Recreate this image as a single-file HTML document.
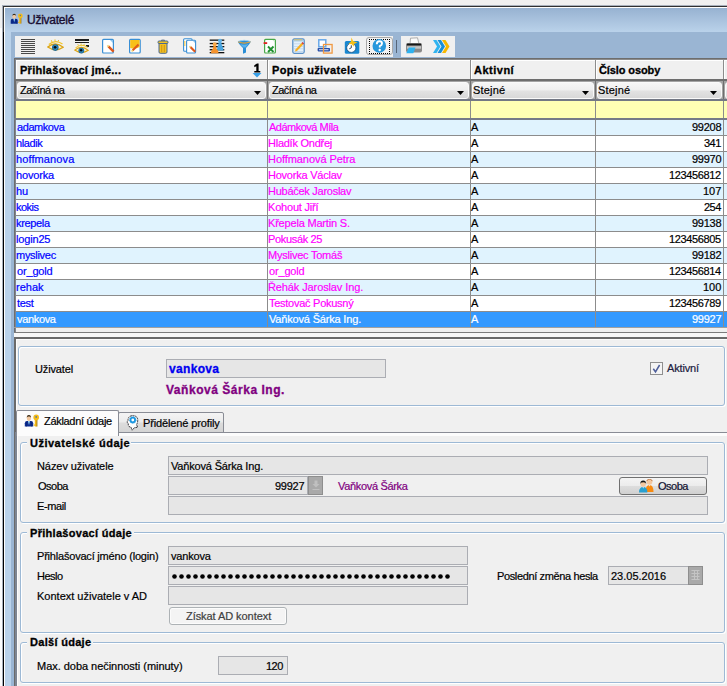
<!DOCTYPE html><html><head><meta charset="utf-8"><style>
*{margin:0;padding:0;box-sizing:border-box}
html,body{width:727px;height:686px;overflow:hidden;background:#f0f0f0}
body{position:relative;font-family:"Liberation Sans",sans-serif;font-size:11px;line-height:13px;color:#000}
div,span,svg{position:absolute}
span{white-space:nowrap;-webkit-text-stroke:0.2px currentColor}
</style></head><body><div style="left:0px;top:0px;width:727px;height:686px;background:#f0f0f0"></div>
<div style="left:0px;top:28px;width:2px;height:658px;background:#fcfcfc"></div>
<div style="left:2px;top:5px;width:725px;height:681px;background:#a8b0bc"></div>
<div style="left:3px;top:6px;width:724px;height:680px;background:#000"></div>
<div style="left:3px;top:6px;width:1px;height:26px;background:#383838"></div>
<div style="left:3px;top:6px;width:724px;height:1px;background:#303030"></div>
<div style="left:4px;top:7px;width:723px;height:679px;background:#fff"></div>
<div style="left:5px;top:8px;width:722px;height:678px;background:#bad2ea"></div>
<div style="left:5px;top:8px;width:722px;height:24px;background:linear-gradient(#97b2d1,#bad2ea)"></div>
<div style="left:11px;top:32px;width:716px;height:654px;background:#9ab5d3"></div>
<svg style="left:9.5px;top:13.3px" width="13.6" height="11" viewBox="0 0 16 13"><path d="M0.8 12.6 V9.2 Q0.8 6.9 3.2 6.9 H6.8 Q9.2 6.9 9.2 9.2 V12.6Z" fill="#0c2c90"/><path d="M2.5 7.5 V12.5 M7.5 7.5 V12.5" stroke="#08206a" stroke-width="0.6"/><path d="M4 6.9 H5.9 L5 11Z" fill="#b0ecfa"/><ellipse cx="4.9" cy="4.1" rx="2.1" ry="2.9" fill="#f2c8a0"/><path d="M2.8 3.8 Q2.6 0.9 4.9 0.9 Q7.2 0.9 7 3.8 Q6.5 2.2 4.9 2.4 Q3.3 2.2 2.8 3.8Z" fill="#3a2c18"/><rect x="10.8" y="5.5" width="2.2" height="7" fill="#f0b818"/><rect x="12.6" y="6" width="0.8" height="6.5" fill="#9a7010"/><rect x="9.7" y="10.4" width="1.1" height="1.4" fill="#e8b010"/><circle cx="12.2" cy="3.4" r="2.8" fill="#f4bc18"/><circle cx="12.2" cy="2.9" r="0.9" fill="#5a78a8"/></svg>
<div style="left:15px;top:36px;width:378px;height:21px;background:#f0f0f0"></div>
<div style="left:401px;top:36px;width:54px;height:21px;background:#f0f0f0"></div>
<div style="left:396px;top:40px;width:1px;height:13px;background:#56667a"></div>
<svg style="left:21px;top:38px" width="14" height="17" viewBox="0 0 14 17"><rect x="0" y="1" width="14" height="1" fill="#4a4a4a"/><rect x="0" y="3" width="14" height="1" fill="#4a4a4a"/><rect x="0" y="5" width="14" height="1" fill="#4a4a4a"/><rect x="0" y="7" width="14" height="1" fill="#4a4a4a"/><rect x="0" y="9" width="14" height="1" fill="#4a4a4a"/><rect x="0" y="11" width="14" height="1" fill="#4a4a4a"/><rect x="0" y="13" width="14" height="1" fill="#4a4a4a"/><rect x="0" y="15" width="14" height="1" fill="#4a4a4a"/></svg>
<svg style="left:47px;top:39px" width="17" height="13" viewBox="0 0 17 13"><path d="M0.8 8 Q8.5 1.8 16.2 8.3 Q8.5 13.6 0.8 8Z" fill="#f4f0dc" stroke="#dca414" stroke-width="1.3"/><path d="M1.8 5.5 Q8.5 -0.2 15.5 5" fill="none" stroke="#f2c428" stroke-width="1.2"/><path d="M5 3 L4.3 1.2 M8 2.2 L8 0.4 M11 2.6 L11.7 1" stroke="#e8b820" stroke-width="0.9"/><circle cx="8.3" cy="8.6" r="3.3" fill="#1e6a9c"/><circle cx="8.3" cy="8.6" r="2.3" fill="#3490c0"/><circle cx="8.1" cy="8.3" r="1.4" fill="#060c14"/></svg>
<svg style="left:74px;top:38px" width="16" height="3" viewBox="0 0 16 3"></svg>
<div style="left:75px;top:39px;width:14px;height:2px;background:#1e1e1e"></div>
<div style="left:75px;top:42px;width:14px;height:1px;background:#1e1e1e"></div>
<div style="left:86px;top:45px;width:3px;height:2px;background:#1e1e1e"></div>
<svg style="left:73.5px;top:43px" width="15" height="11.5" viewBox="0 0 17 13"><path d="M0.8 8 Q8.5 1.8 16.2 8.3 Q8.5 13.6 0.8 8Z" fill="#f4f0dc" stroke="#dca414" stroke-width="1.3"/><path d="M1.8 5.5 Q8.5 -0.2 15.5 5" fill="none" stroke="#f2c428" stroke-width="1.2"/><path d="M5 3 L4.3 1.2 M8 2.2 L8 0.4 M11 2.6 L11.7 1" stroke="#e8b820" stroke-width="0.9"/><circle cx="8.3" cy="8.6" r="3.3" fill="#1e6a9c"/><circle cx="8.3" cy="8.6" r="2.3" fill="#3490c0"/><circle cx="8.1" cy="8.3" r="1.4" fill="#060c14"/></svg>
<svg style="left:101px;top:38px" width="15" height="16" viewBox="0 0 15 16"><rect x="1.6" y="1.4" width="10.8" height="13.6" rx="1" fill="#fff" stroke="#3a8fd5" stroke-width="1.2"/><path d="M9 2 H12 V5Z" fill="#8ac4f0"/><path d="M7.4 8.4 L12.6 13.6" stroke="#e0581a" stroke-width="2.4"/><path d="M6.4 7.4 L7.6 8.6" stroke="#f0d070" stroke-width="1.8"/></svg>
<svg style="left:128px;top:38px" width="14" height="16" viewBox="0 0 14 16"><rect x="1.6" y="1.4" width="10.6" height="13.6" rx="1" fill="#fff" stroke="#3a8fd5" stroke-width="1.2"/><path d="M2.2 2 H11.6 V9 Q7 11.5 2.2 10Z" fill="#f8c018"/><path d="M4.5 12.5 L10.5 6.5" stroke="#e0581a" stroke-width="2.2"/><path d="M3.6 13.4 L4.8 12.2" stroke="#f0d070" stroke-width="1.6"/></svg>
<svg style="left:157px;top:39px" width="12" height="15" viewBox="0 0 12 15"><path d="M4.5 1 H7.5 V2 H4.5Z" fill="#f0c020" stroke="#5a7090" stroke-width="0.8"/><rect x="1" y="2" width="10" height="2.5" rx="1" fill="#f4c420" stroke="#4a6890" stroke-width="1"/><path d="M2 4.5 H10 V13 Q10 14.3 8.7 14.3 H3.3 Q2 14.3 2 13Z" fill="#f4c020" stroke="#4a6890" stroke-width="1"/><rect x="4.3" y="6" width="0.9" height="7" fill="#c89010"/><rect x="6.8" y="6" width="0.9" height="7" fill="#c89010"/></svg>
<svg style="left:182px;top:37px" width="16" height="17" viewBox="0 0 16 17"><rect x="1.6" y="1.8" width="8.5" height="12.4" rx="1" fill="#fff" stroke="#3a8fd5" stroke-width="1.1"/><rect x="2.4" y="4" width="0.9" height="5" fill="#f8c020"/><rect x="4.6" y="3.2" width="9" height="12.8" rx="1" fill="#fff" stroke="#3a8fd5" stroke-width="1.1"/><path d="M11 4 H13 V6Z" fill="#8ac4f0"/><path d="M8.4 10 L13.2 14.8" stroke="#e0581a" stroke-width="2.2"/><path d="M7.5 9.1 L8.6 10.2" stroke="#f0d070" stroke-width="1.6"/></svg>
<svg style="left:209px;top:38px" width="16" height="16" viewBox="0 0 16 16"><rect x="0.7" y="1.5" width="14.6" height="1.3" fill="#101010"/><rect x="0.7" y="4.9" width="14.6" height="1.3" fill="#101010"/><rect x="0.7" y="8.0" width="14.6" height="1.3" fill="#101010"/><rect x="0.7" y="11.1" width="14.6" height="1.3" fill="#101010"/><rect x="0.7" y="14.0" width="14.6" height="1.3" fill="#101010"/><path d="M11 3.6 Q9 4.6 9.2 7 Q8 9 8 12.5 H14.5 Q14.5 9 12.8 7 Q13 4.6 11 3.6Z" fill="#4aa6e0"/><circle cx="11" cy="2.8" r="2" fill="#60b4ea"/><path d="M5.7 7.2 Q3.7 8.2 3.9 10.5 Q2 12.5 2 15.3 H9.5 Q9.5 12.5 7.5 10.5 Q7.7 8.2 5.7 7.2Z" fill="#f4922c"/><circle cx="5.7" cy="6.3" r="2" fill="#f8a848"/></svg>
<svg style="left:237px;top:38px" width="15" height="16" viewBox="0 0 15 16"><path d="M0.8 3.5 Q7 0.8 13.8 3.5 Q13 5.5 9 10 V14.5 L6 15.8 V10 Q1.5 5.5 0.8 3.5Z" fill="#2a8ed6"/><path d="M3 6 Q7 7.5 11.5 6 L8.5 9.5 H6.5Z" fill="#5cb4ec"/><path d="M1.2 3.8 Q7 6.5 13.4 3.8" fill="none" stroke="#e8a030" stroke-width="1.1"/><path d="M1.5 3.2 Q7 1.2 13 3.2" fill="none" stroke="#a8d8f4" stroke-width="0.8"/></svg>
<svg style="left:263px;top:38px" width="14" height="16" viewBox="0 0 14 16"><rect x="1.6" y="1.4" width="10.8" height="13.6" rx="1" fill="#fff" stroke="#48a848" stroke-width="1.2"/><path d="M9.5 2 H12 V4.5Z" fill="#c8e8c8"/><rect x="0.6" y="4.2" width="3.6" height="1.8" fill="#e02020"/><path d="M5 8.5 L10.5 14 M10.5 8.5 L5 14" stroke="#209030" stroke-width="1.9"/></svg>
<svg style="left:292px;top:38px" width="13" height="16" viewBox="0 0 13 16"><rect x="0.8" y="1" width="11.4" height="14.3" rx="1.5" fill="#e4f0fa" stroke="#5a90c8" stroke-width="1.3"/><rect x="1.5" y="1.5" width="10" height="2" fill="#a8cce8"/><circle cx="3" cy="1.8" r="0.7" fill="#e8c040"/><circle cx="5" cy="1.8" r="0.7" fill="#e8c040"/><circle cx="7" cy="1.8" r="0.7" fill="#e8c040"/><circle cx="9" cy="1.8" r="0.7" fill="#e8c040"/><rect x="2" y="5.5" width="9" height="0.7" fill="#b8d0e8"/><rect x="2" y="8" width="9" height="0.7" fill="#b8d0e8"/><rect x="2" y="10.5" width="9" height="0.7" fill="#b8d0e8"/><rect x="2" y="13" width="9" height="0.7" fill="#b8d0e8"/><path d="M3.5 11.5 L9.5 5 L11.2 6.6 L5 13 L3 13.5Z" fill="#f8b020"/><path d="M9.5 5 L10.5 4 L12 5.6 L11.2 6.6Z" fill="#d03030"/></svg>
<svg style="left:317px;top:39px" width="16" height="15" viewBox="0 0 16 15"><rect x="1.8" y="0.8" width="7" height="7" fill="#fff" stroke="#68a8e8" stroke-width="1.5"/><rect x="0.6" y="9" width="12.4" height="3.4" rx="0.8" fill="#2850a8"/><rect x="2" y="10.3" width="9.5" height="0.9" fill="#e8f0ff"/><rect x="6.5" y="5.5" width="8.6" height="8.6" fill="none" stroke="#f09840" stroke-width="1.3"/></svg>
<svg style="left:344px;top:37px" width="16" height="17" viewBox="0 0 16 17"><rect x="0.8" y="4" width="14.5" height="12.8" rx="1.5" fill="#1a88d0"/><circle cx="7.3" cy="10.8" r="4.6" fill="#fff" stroke="#104070" stroke-width="0.7"/><path d="M7.3 8.3 V10.8 L5.3 11.8" stroke="#203040" stroke-width="0.9" fill="none"/><path d="M7.5 0.5 L9 4 L13.5 5.5 L10 7 L9.8 9.8 L7.8 7.2 L4.5 7 L7 4.5Z" fill="#f8c018"/></svg>
<div style="left:366px;top:37px;width:27px;height:18px;border:1px solid #a8a8a8;border-radius:3px;background:#f2f2f2"></div>
<div style="left:369px;top:39px;width:21px;height:15px;border:1px dotted #000"></div>
<svg style="left:372px;top:39px" width="15" height="14" viewBox="0 0 15 14"><circle cx="7.3" cy="6.9" r="6.8" fill="#2898dc"/><path d="M4.8 5.2 Q4.8 2.3 7.4 2.3 Q10 2.3 10 4.6 Q10 6.2 7.8 7.2 V8.6" fill="none" stroke="#fff" stroke-width="1.9"/><circle cx="7.7" cy="11" r="1.2" fill="#fff"/></svg>
<svg style="left:405px;top:37px" width="18" height="17" viewBox="0 0 18 17"><path d="M5.5 1.2 L12.5 0.8 L14 7 H5Z" fill="#fbfbfb" stroke="#9a9a9a" stroke-width="0.8"/><path d="M1 8.2 Q1 6 3.2 6 H14.8 Q17 6 17 8.2 V13.5 Q17 15.5 15 15.5 H3 Q1 15.5 1 13.5Z" fill="#8a8a8a"/><rect x="1.8" y="6.6" width="14.4" height="1.8" fill="#161616"/><rect x="2" y="9.2" width="14" height="2.5" fill="#c4c4c4"/><path d="M3.8 10.5 H10.5 L8.3 16.2 H1.3Z" fill="#2eb2f0"/></svg>
<svg style="left:433px;top:40px" width="17" height="13" viewBox="0 0 17 13"><path d="M9 0 H12.5 L16.5 6.5 L12.5 13 H9 L13 6.5Z" fill="#f8b800"/><path d="M4.5 0 H8 L12 6.5 L8 13 H4.5 L8.5 6.5Z" fill="#1a90d8"/><path d="M0 0 H3.5 L7.5 6.5 L3.5 13 H0 L4 6.5Z" fill="#30b4f0"/></svg>
<div style="left:14px;top:58px;width:713px;height:275px;background:#6e6e6e"></div>
<div style="left:15px;top:59px;width:712px;height:273px;background:#8c8c8c"></div>
<div style="left:15px;top:59px;width:1px;height:274px;background:#80858f"></div>
<div style="left:16px;top:60px;width:251px;height:19px;background:#f0f0f0;border-top:1px solid #fff;border-left:1px solid #fff"></div>
<div style="left:268px;top:60px;width:202px;height:19px;background:#f0f0f0;border-top:1px solid #fff;border-left:1px solid #fff"></div>
<div style="left:471px;top:60px;width:124px;height:19px;background:#f0f0f0;border-top:1px solid #fff;border-left:1px solid #fff"></div>
<div style="left:596px;top:60px;width:127px;height:19px;background:#f0f0f0;border-top:1px solid #fff;border-left:1px solid #fff"></div>
<div style="left:724px;top:60px;width:36px;height:19px;background:#f0f0f0;border-top:1px solid #fff;border-left:1px solid #fff"></div>
<div style="left:14px;top:79px;width:713px;height:2px;background:#6e6e6e"></div>
<div style="left:14px;top:81px;width:713px;height:18px;background:#a4a4a4"></div>
<div style="left:14px;top:81px;width:1px;height:18px;background:#6e6e6e"></div>
<div style="left:15px;top:81px;width:1px;height:18px;background:#6e6e6e"></div>
<div style="left:267px;top:81px;width:1px;height:18px;background:#6e6e6e"></div>
<div style="left:470px;top:81px;width:1px;height:18px;background:#6e6e6e"></div>
<div style="left:595px;top:81px;width:1px;height:18px;background:#6e6e6e"></div>
<div style="left:723px;top:81px;width:1px;height:18px;background:#6e6e6e"></div>
<div style="left:17px;top:82px;width:249px;height:17px;background:linear-gradient(#f6f6f6 0%,#efefef 45%,#e2e2e2 55%,#d8d8d8 100%);border:1px solid #fafafa;border-radius:3px"></div>
<div style="left:269px;top:82px;width:200px;height:17px;background:linear-gradient(#f6f6f6 0%,#efefef 45%,#e2e2e2 55%,#d8d8d8 100%);border:1px solid #fafafa;border-radius:3px"></div>
<div style="left:472px;top:82px;width:122px;height:17px;background:linear-gradient(#f6f6f6 0%,#efefef 45%,#e2e2e2 55%,#d8d8d8 100%);border:1px solid #fafafa;border-radius:3px"></div>
<div style="left:597px;top:82px;width:125px;height:17px;background:linear-gradient(#f6f6f6 0%,#efefef 45%,#e2e2e2 55%,#d8d8d8 100%);border:1px solid #fafafa;border-radius:3px"></div>
<div style="left:725px;top:82px;width:34px;height:17px;background:linear-gradient(#f6f6f6 0%,#efefef 45%,#e2e2e2 55%,#d8d8d8 100%);border:1px solid #fafafa;border-radius:3px"></div>
<div style="left:14px;top:99px;width:713px;height:2px;background:#737884"></div>
<div style="left:16px;top:101px;width:251px;height:17px;background:#ffffb4"></div>
<div style="left:268px;top:101px;width:202px;height:17px;background:#ffffb4"></div>
<div style="left:471px;top:101px;width:124px;height:17px;background:#ffffb4"></div>
<div style="left:596px;top:101px;width:127px;height:17px;background:#ffffb4"></div>
<div style="left:724px;top:101px;width:36px;height:17px;background:#ffffb4"></div>
<div style="left:14px;top:118px;width:713px;height:2px;background:#757a88"></div>
<div style="left:16px;top:120px;width:251px;height:15px;background:#e0f3fe"></div>
<div style="left:268px;top:120px;width:202px;height:15px;background:#e0f3fe"></div>
<div style="left:471px;top:120px;width:124px;height:15px;background:#e0f3fe"></div>
<div style="left:596px;top:120px;width:127px;height:15px;background:#e0f3fe"></div>
<div style="left:724px;top:120px;width:36px;height:15px;background:#e0f3fe"></div>
<div style="left:16px;top:136px;width:251px;height:15px;background:#ffffff"></div>
<div style="left:268px;top:136px;width:202px;height:15px;background:#ffffff"></div>
<div style="left:471px;top:136px;width:124px;height:15px;background:#ffffff"></div>
<div style="left:596px;top:136px;width:127px;height:15px;background:#ffffff"></div>
<div style="left:724px;top:136px;width:36px;height:15px;background:#ffffff"></div>
<div style="left:16px;top:152px;width:251px;height:15px;background:#e0f3fe"></div>
<div style="left:268px;top:152px;width:202px;height:15px;background:#e0f3fe"></div>
<div style="left:471px;top:152px;width:124px;height:15px;background:#e0f3fe"></div>
<div style="left:596px;top:152px;width:127px;height:15px;background:#e0f3fe"></div>
<div style="left:724px;top:152px;width:36px;height:15px;background:#e0f3fe"></div>
<div style="left:16px;top:168px;width:251px;height:15px;background:#ffffff"></div>
<div style="left:268px;top:168px;width:202px;height:15px;background:#ffffff"></div>
<div style="left:471px;top:168px;width:124px;height:15px;background:#ffffff"></div>
<div style="left:596px;top:168px;width:127px;height:15px;background:#ffffff"></div>
<div style="left:724px;top:168px;width:36px;height:15px;background:#ffffff"></div>
<div style="left:16px;top:184px;width:251px;height:15px;background:#e0f3fe"></div>
<div style="left:268px;top:184px;width:202px;height:15px;background:#e0f3fe"></div>
<div style="left:471px;top:184px;width:124px;height:15px;background:#e0f3fe"></div>
<div style="left:596px;top:184px;width:127px;height:15px;background:#e0f3fe"></div>
<div style="left:724px;top:184px;width:36px;height:15px;background:#e0f3fe"></div>
<div style="left:16px;top:200px;width:251px;height:15px;background:#ffffff"></div>
<div style="left:268px;top:200px;width:202px;height:15px;background:#ffffff"></div>
<div style="left:471px;top:200px;width:124px;height:15px;background:#ffffff"></div>
<div style="left:596px;top:200px;width:127px;height:15px;background:#ffffff"></div>
<div style="left:724px;top:200px;width:36px;height:15px;background:#ffffff"></div>
<div style="left:16px;top:216px;width:251px;height:15px;background:#e0f3fe"></div>
<div style="left:268px;top:216px;width:202px;height:15px;background:#e0f3fe"></div>
<div style="left:471px;top:216px;width:124px;height:15px;background:#e0f3fe"></div>
<div style="left:596px;top:216px;width:127px;height:15px;background:#e0f3fe"></div>
<div style="left:724px;top:216px;width:36px;height:15px;background:#e0f3fe"></div>
<div style="left:16px;top:232px;width:251px;height:15px;background:#ffffff"></div>
<div style="left:268px;top:232px;width:202px;height:15px;background:#ffffff"></div>
<div style="left:471px;top:232px;width:124px;height:15px;background:#ffffff"></div>
<div style="left:596px;top:232px;width:127px;height:15px;background:#ffffff"></div>
<div style="left:724px;top:232px;width:36px;height:15px;background:#ffffff"></div>
<div style="left:16px;top:248px;width:251px;height:15px;background:#e0f3fe"></div>
<div style="left:268px;top:248px;width:202px;height:15px;background:#e0f3fe"></div>
<div style="left:471px;top:248px;width:124px;height:15px;background:#e0f3fe"></div>
<div style="left:596px;top:248px;width:127px;height:15px;background:#e0f3fe"></div>
<div style="left:724px;top:248px;width:36px;height:15px;background:#e0f3fe"></div>
<div style="left:16px;top:264px;width:251px;height:15px;background:#ffffff"></div>
<div style="left:268px;top:264px;width:202px;height:15px;background:#ffffff"></div>
<div style="left:471px;top:264px;width:124px;height:15px;background:#ffffff"></div>
<div style="left:596px;top:264px;width:127px;height:15px;background:#ffffff"></div>
<div style="left:724px;top:264px;width:36px;height:15px;background:#ffffff"></div>
<div style="left:16px;top:280px;width:251px;height:15px;background:#e0f3fe"></div>
<div style="left:268px;top:280px;width:202px;height:15px;background:#e0f3fe"></div>
<div style="left:471px;top:280px;width:124px;height:15px;background:#e0f3fe"></div>
<div style="left:596px;top:280px;width:127px;height:15px;background:#e0f3fe"></div>
<div style="left:724px;top:280px;width:36px;height:15px;background:#e0f3fe"></div>
<div style="left:16px;top:296px;width:251px;height:15px;background:#ffffff"></div>
<div style="left:268px;top:296px;width:202px;height:15px;background:#ffffff"></div>
<div style="left:471px;top:296px;width:124px;height:15px;background:#ffffff"></div>
<div style="left:596px;top:296px;width:127px;height:15px;background:#ffffff"></div>
<div style="left:724px;top:296px;width:36px;height:15px;background:#ffffff"></div>
<div style="left:16px;top:312px;width:251px;height:15px;background:#3399ff"></div>
<div style="left:268px;top:312px;width:202px;height:15px;background:#3399ff"></div>
<div style="left:471px;top:312px;width:124px;height:15px;background:#3399ff"></div>
<div style="left:596px;top:312px;width:127px;height:15px;background:#3399ff"></div>
<div style="left:724px;top:312px;width:36px;height:15px;background:#3399ff"></div>
<div style="left:16px;top:328px;width:711px;height:4px;background:#f0f0f0"></div>
<div style="left:14px;top:327px;width:713px;height:1px;background:#a0a0a0"></div>
<div style="left:14px;top:332px;width:713px;height:1px;background:#7c7c7c"></div>
<svg style="left:254px;top:91px" width="7" height="4" viewBox="0 0 7 4"><path d="M0 0H7L3.5 4Z" fill="#000"/></svg>
<svg style="left:457px;top:91px" width="7" height="4" viewBox="0 0 7 4"><path d="M0 0H7L3.5 4Z" fill="#000"/></svg>
<svg style="left:582px;top:91px" width="7" height="4" viewBox="0 0 7 4"><path d="M0 0H7L3.5 4Z" fill="#000"/></svg>
<svg style="left:710px;top:91px" width="7" height="4" viewBox="0 0 7 4"><path d="M0 0H7L3.5 4Z" fill="#000"/></svg>
<svg style="left:252px;top:63px" width="10" height="15" viewBox="0 0 10 15"><path d="M2.3 2.3 L5 0.5 H6.6 V8 H8.3 V9.6 H2.3 V8 H4.3 V3.2 L2.3 4.2Z" fill="#000"/><path d="M0.5 10 H9.5 L5 14.5Z" fill="#38a0e8"/></svg>
<div style="left:14px;top:333px;width:713px;height:4px;background:#f8f8f8"></div>
<div style="left:14px;top:337px;width:713px;height:349px;background:#6a6a6a"></div>
<div style="left:16px;top:339px;width:711px;height:347px;background:#fcfcfc"></div>
<div style="left:17px;top:340px;width:710px;height:346px;background:#f0f0f0"></div>
<div style="left:18px;top:346px;width:707px;height:60px;border:1px solid #9db9d5;border-radius:3px;box-shadow:inset 1px 1px 0 #fff, 1px 1px 0 #fff"></div>
<div style="left:166px;top:359px;width:220px;height:19px;background:#e6e6e6;border:1px solid #abadb3"></div>
<div style="left:650px;top:362px;width:13px;height:13px;border:1px solid #8f8f8f;background:#f4f4f4"></div>
<svg style="left:651px;top:363px" width="11" height="11" viewBox="0 0 11 11"><path d="M2.3 5.8 L4.5 8.8 L8.6 2" fill="none" stroke="#4e5e9a" stroke-width="1.5"/></svg>
<div style="left:14px;top:432px;width:713px;height:254px;background:#6a6a6a"></div>
<div style="left:15px;top:432px;width:712px;height:254px;background:#7d8592"></div>
<div style="left:17px;top:432px;width:710px;height:254px;background:#fcfcfc"></div>
<div style="left:17px;top:432px;width:710px;height:1px;background:#898c95"></div>
<div style="left:18px;top:436px;width:709px;height:250px;background:#f0f0f0"></div>
<div style="left:118px;top:412px;width:106px;height:21px;border:1px solid #898c95;background:linear-gradient(#f4f4f4,#ececec 45%,#dcdcdc 55%,#d4d4d4);border-radius:2px 2px 0 0"></div>
<svg style="left:126px;top:415px" width="13" height="16" viewBox="0 0 13 16"><path d="M6.4 0.7 Q10.8 0.5 11.7 4 Q12 7 10.6 9.6 L11.6 12.3 L8.2 12.8 L6.2 15.2 L5 12.2 Q2.6 11.8 2.4 10.4 L2.2 8.6 L0.9 7 L2 5.5 Q2 1 6.4 0.7Z" fill="#fdfdfd" stroke="#2a2a30" stroke-width="0.9" stroke-dasharray="2 0.6"/><circle cx="6.8" cy="5" r="2.3" fill="none" stroke="#1a96e0" stroke-width="1.8"/><circle cx="6.8" cy="5" r="3.3" fill="none" stroke="#3aa8e8" stroke-width="1" stroke-dasharray="1.2 1"/><circle cx="6.8" cy="5" r="1" fill="#fff"/></svg>
<div style="left:16px;top:410px;width:103px;height:26px;border:1px solid #898c95;border-bottom:none;background:#fcfcfc;border-radius:2px 2px 0 0"></div>
<svg style="left:23.7px;top:414px" width="16" height="13" viewBox="0 0 16 13"><path d="M0.8 12.6 V9.2 Q0.8 6.9 3.2 6.9 H6.8 Q9.2 6.9 9.2 9.2 V12.6Z" fill="#0c2c90"/><path d="M2.5 7.5 V12.5 M7.5 7.5 V12.5" stroke="#08206a" stroke-width="0.6"/><path d="M4 6.9 H5.9 L5 11Z" fill="#b0ecfa"/><ellipse cx="4.9" cy="4.1" rx="2.1" ry="2.9" fill="#f2c8a0"/><path d="M2.8 3.8 Q2.6 0.9 4.9 0.9 Q7.2 0.9 7 3.8 Q6.5 2.2 4.9 2.4 Q3.3 2.2 2.8 3.8Z" fill="#3a2c18"/><rect x="10.8" y="5.5" width="2.2" height="7" fill="#f0b818"/><rect x="12.6" y="6" width="0.8" height="6.5" fill="#9a7010"/><rect x="9.7" y="10.4" width="1.1" height="1.4" fill="#e8b010"/><circle cx="12.2" cy="3.4" r="2.8" fill="#f4bc18"/><circle cx="12.2" cy="2.9" r="0.9" fill="#5a78a8"/></svg>
<div style="left:20px;top:442px;width:705px;height:81px;border:1px solid #9db9d5;border-radius:3px;box-shadow:inset 1px 1px 0 #fff, 1px 1px 0 #fff"></div>
<div style="left:27px;top:436px;width:104px;height:12px;background:#f0f0f0"></div>
<div style="left:168px;top:456px;width:540px;height:19px;background:#e6e6e6;border:1px solid #abadb3"></div>
<div style="left:168px;top:476px;width:140px;height:19px;background:#e6e6e6;border:1px solid #abadb3"></div>
<div style="left:308px;top:476px;width:15px;height:19px;background:#a9a9a9;border:1px solid #8e8e8e"></div>
<svg style="left:310.5px;top:479px" width="10" height="13" viewBox="0 0 10 13"><path d="M3.5 1.5 H6.5 V5 H8.5 L5 8.5 L1.5 5 H3.5Z M1.5 10 H8.5 V11 H1.5Z" fill="#c0c0c0"/></svg>
<div style="left:619px;top:477px;width:88px;height:18px;border:1px solid #707070;border-radius:3px;background:linear-gradient(#f4f4f4,#ececec 48%,#dddddd 52%,#d0d0d0)"></div>
<svg style="left:638px;top:478px" width="17" height="15" viewBox="0 0 17 15"><circle cx="11.5" cy="4" r="2.8" fill="#f4c8a0"/><path d="M8.6 3.5 Q11.5 -0.5 14.4 3.5 V2.2 Q11.5 0 8.6 2.2Z" fill="#b86830"/><path d="M7.5 14 Q7.5 7 11.5 7 Q15.5 7 15.5 14Z" fill="#f88a10"/><path d="M10.8 7.2 H12.3 L11.5 8.5Z" fill="#fff"/><circle cx="5.2" cy="6" r="2.7" fill="#f4c8a0"/><path d="M2.2 6.5 Q2 2.6 5.2 2.6 Q8.4 2.6 8.2 6.5 L7.6 4.8 Q5.2 3.5 2.8 4.8Z" fill="#181818"/><path d="M1 14.5 Q1 9 5.2 9 Q9.4 9 9.4 14.5Z" fill="#28a0d0"/><path d="M4.5 9.2 H6 L5.2 10.5Z" fill="#fff"/></svg>
<div style="left:168px;top:496px;width:540px;height:19px;background:#e6e6e6;border:1px solid #abadb3"></div>
<div style="left:20px;top:532px;width:705px;height:101px;border:1px solid #9db9d5;border-radius:3px;box-shadow:inset 1px 1px 0 #fff, 1px 1px 0 #fff"></div>
<div style="left:27px;top:526px;width:107px;height:12px;background:#f0f0f0"></div>
<div style="left:168px;top:546px;width:300px;height:19px;background:#e6e6e6;border:1px solid #abadb3"></div>
<div style="left:168px;top:566px;width:300px;height:19px;background:#e6e6e6;border:1px solid #abadb3"></div>
<svg style="left:171.7px;top:573.8px" width="280" height="5" viewBox="0 0 280 5"><circle cx="2.5" cy="2.5" r="2.3" fill="#000"/><circle cx="9.5" cy="2.5" r="2.3" fill="#000"/><circle cx="16.5" cy="2.5" r="2.3" fill="#000"/><circle cx="23.5" cy="2.5" r="2.3" fill="#000"/><circle cx="30.5" cy="2.5" r="2.3" fill="#000"/><circle cx="37.5" cy="2.5" r="2.3" fill="#000"/><circle cx="44.5" cy="2.5" r="2.3" fill="#000"/><circle cx="51.5" cy="2.5" r="2.3" fill="#000"/><circle cx="58.5" cy="2.5" r="2.3" fill="#000"/><circle cx="65.5" cy="2.5" r="2.3" fill="#000"/><circle cx="72.5" cy="2.5" r="2.3" fill="#000"/><circle cx="79.5" cy="2.5" r="2.3" fill="#000"/><circle cx="86.5" cy="2.5" r="2.3" fill="#000"/><circle cx="93.5" cy="2.5" r="2.3" fill="#000"/><circle cx="100.5" cy="2.5" r="2.3" fill="#000"/><circle cx="107.5" cy="2.5" r="2.3" fill="#000"/><circle cx="114.5" cy="2.5" r="2.3" fill="#000"/><circle cx="121.5" cy="2.5" r="2.3" fill="#000"/><circle cx="128.5" cy="2.5" r="2.3" fill="#000"/><circle cx="135.5" cy="2.5" r="2.3" fill="#000"/><circle cx="142.5" cy="2.5" r="2.3" fill="#000"/><circle cx="149.5" cy="2.5" r="2.3" fill="#000"/><circle cx="156.5" cy="2.5" r="2.3" fill="#000"/><circle cx="163.5" cy="2.5" r="2.3" fill="#000"/><circle cx="170.5" cy="2.5" r="2.3" fill="#000"/><circle cx="177.5" cy="2.5" r="2.3" fill="#000"/><circle cx="184.5" cy="2.5" r="2.3" fill="#000"/><circle cx="191.5" cy="2.5" r="2.3" fill="#000"/><circle cx="198.5" cy="2.5" r="2.3" fill="#000"/><circle cx="205.5" cy="2.5" r="2.3" fill="#000"/><circle cx="212.5" cy="2.5" r="2.3" fill="#000"/><circle cx="219.5" cy="2.5" r="2.3" fill="#000"/><circle cx="226.5" cy="2.5" r="2.3" fill="#000"/><circle cx="233.5" cy="2.5" r="2.3" fill="#000"/><circle cx="240.5" cy="2.5" r="2.3" fill="#000"/><circle cx="247.5" cy="2.5" r="2.3" fill="#000"/><circle cx="254.5" cy="2.5" r="2.3" fill="#000"/><circle cx="261.5" cy="2.5" r="2.3" fill="#000"/><circle cx="268.5" cy="2.5" r="2.3" fill="#000"/><circle cx="275.5" cy="2.5" r="2.3" fill="#000"/></svg>
<div style="left:168px;top:586px;width:300px;height:19px;background:#e6e6e6;border:1px solid #abadb3"></div>
<div style="left:169px;top:607px;width:118px;height:18px;border:1px solid #adb2b5;border-radius:3px;background:#f4f4f4;box-shadow:inset 0 0 0 1px #fcfcfc"></div>
<div style="left:608px;top:566px;width:95px;height:19px;background:#e6e6e6;border:1px solid #abadb3"></div>
<div style="left:688px;top:566px;width:15px;height:19px;background:#a9a9a9;border:1px solid #8e8e8e"></div>
<svg style="left:691px;top:569px" width="9" height="13" viewBox="0 0 9 13"><rect x="0.5" y="1" width="8" height="1" fill="#c4c4c4"/><rect x="0.5" y="4" width="8" height="1" fill="#c4c4c4"/><rect x="0.5" y="7" width="8" height="1" fill="#c4c4c4"/><rect x="0.5" y="10" width="8" height="1" fill="#c4c4c4"/><rect x="3" y="1" width="1" height="10" fill="#c4c4c4"/><rect x="6" y="1" width="1" height="10" fill="#c4c4c4"/></svg>
<div style="left:20px;top:642px;width:705px;height:41px;border:1px solid #9db9d5;border-radius:3px;box-shadow:inset 1px 1px 0 #fff, 1px 1px 0 #fff"></div>
<div style="left:27px;top:636px;width:66px;height:12px;background:#f0f0f0"></div>
<div style="left:218px;top:656px;width:70px;height:19px;background:#e6e6e6;border:1px solid #abadb3"></div>
<span style="left:27px;top:13px;font-size:12px;line-height:14px;-webkit-text-stroke:0.35px currentColor;letter-spacing:-0.25px;color:#180c30;">Uživatelé</span>
<span style="left:17px;top:121px;font-size:11px;line-height:13px;letter-spacing:-0.429px;color:#0000ff;">adamkova</span>
<span style="left:269px;top:121px;font-size:11px;line-height:13px;letter-spacing:-0.5px;color:#ff00ff;">Adámková Míla</span>
<span style="left:471px;top:121px;font-size:11px;line-height:13px;letter-spacing:0px;color:#000;">A</span>
<span style="left:692px;top:121px;font-size:11px;line-height:13px;letter-spacing:-0.25px;color:#000;">99208</span>
<span style="left:16px;top:137px;font-size:11px;line-height:13px;letter-spacing:-0.4px;color:#0000ff;">hladik</span>
<span style="left:268px;top:137px;font-size:11px;line-height:13px;letter-spacing:-0.25px;color:#ff00ff;">Hladík Ondřej</span>
<span style="left:471px;top:137px;font-size:11px;line-height:13px;letter-spacing:0px;color:#000;">A</span>
<span style="left:704px;top:137px;font-size:11px;line-height:13px;letter-spacing:-0.5px;color:#000;">341</span>
<span style="left:16px;top:153px;font-size:11px;line-height:13px;letter-spacing:0.111px;color:#0000ff;">hoffmanova</span>
<span style="left:268px;top:153px;font-size:11px;line-height:13px;letter-spacing:-0.067px;color:#ff00ff;">Hoffmanová Petra</span>
<span style="left:471px;top:153px;font-size:11px;line-height:13px;letter-spacing:0px;color:#000;">A</span>
<span style="left:692px;top:153px;font-size:11px;line-height:13px;letter-spacing:-0.25px;color:#000;">99970</span>
<span style="left:16px;top:169px;font-size:11px;line-height:13px;letter-spacing:-0.167px;color:#0000ff;">hovorka</span>
<span style="left:268px;top:169px;font-size:11px;line-height:13px;letter-spacing:-0.231px;color:#ff00ff;">Hovorka Václav</span>
<span style="left:471px;top:169px;font-size:11px;line-height:13px;letter-spacing:0px;color:#000;">A</span>
<span style="left:669px;top:169px;font-size:11px;line-height:13px;letter-spacing:-0.375px;color:#000;">123456812</span>
<span style="left:16px;top:185px;font-size:11px;line-height:13px;letter-spacing:0.0px;color:#0000ff;">hu</span>
<span style="left:268px;top:185px;font-size:11px;line-height:13px;letter-spacing:-0.267px;color:#ff00ff;">Hubáček Jaroslav</span>
<span style="left:471px;top:185px;font-size:11px;line-height:13px;letter-spacing:0px;color:#000;">A</span>
<span style="left:703px;top:185px;font-size:11px;line-height:13px;letter-spacing:0.0px;color:#000;">107</span>
<span style="left:16px;top:201px;font-size:11px;line-height:13px;letter-spacing:-0.5px;color:#0000ff;">kokis</span>
<span style="left:268px;top:201px;font-size:11px;line-height:13px;letter-spacing:-0.2px;color:#ff00ff;">Kohout Jiří</span>
<span style="left:471px;top:201px;font-size:11px;line-height:13px;letter-spacing:0px;color:#000;">A</span>
<span style="left:704px;top:201px;font-size:11px;line-height:13px;letter-spacing:-0.5px;color:#000;">254</span>
<span style="left:16px;top:217px;font-size:11px;line-height:13px;letter-spacing:-0.333px;color:#0000ff;">krepela</span>
<span style="left:268px;top:217px;font-size:11px;line-height:13px;letter-spacing:-0.188px;color:#ff00ff;">Křepela Martin S.</span>
<span style="left:471px;top:217px;font-size:11px;line-height:13px;letter-spacing:0px;color:#000;">A</span>
<span style="left:692px;top:217px;font-size:11px;line-height:13px;letter-spacing:-0.25px;color:#000;">99138</span>
<span style="left:16px;top:233px;font-size:11px;line-height:13px;letter-spacing:-0.167px;color:#0000ff;">login25</span>
<span style="left:268px;top:233px;font-size:11px;line-height:13px;letter-spacing:-0.333px;color:#ff00ff;">Pokusák 25</span>
<span style="left:471px;top:233px;font-size:11px;line-height:13px;letter-spacing:0px;color:#000;">A</span>
<span style="left:669px;top:233px;font-size:11px;line-height:13px;letter-spacing:-0.375px;color:#000;">123456805</span>
<span style="left:16px;top:249px;font-size:11px;line-height:13px;letter-spacing:-0.286px;color:#0000ff;">myslivec</span>
<span style="left:268px;top:249px;font-size:11px;line-height:13px;letter-spacing:-0.231px;color:#ff00ff;">Myslivec Tomáš</span>
<span style="left:471px;top:249px;font-size:11px;line-height:13px;letter-spacing:0px;color:#000;">A</span>
<span style="left:692px;top:249px;font-size:11px;line-height:13px;letter-spacing:-0.25px;color:#000;">99182</span>
<span style="left:17px;top:265px;font-size:11px;line-height:13px;letter-spacing:-0.167px;color:#0000ff;">or_gold</span>
<span style="left:269px;top:265px;font-size:11px;line-height:13px;letter-spacing:-0.167px;color:#ff00ff;">or_gold</span>
<span style="left:471px;top:265px;font-size:11px;line-height:13px;letter-spacing:0px;color:#000;">A</span>
<span style="left:669px;top:265px;font-size:11px;line-height:13px;letter-spacing:-0.375px;color:#000;">123456814</span>
<span style="left:16px;top:281px;font-size:11px;line-height:13px;letter-spacing:0.0px;color:#0000ff;">rehak</span>
<span style="left:268px;top:281px;font-size:11px;line-height:13px;letter-spacing:-0.111px;color:#ff00ff;">Řehák Jaroslav Ing.</span>
<span style="left:471px;top:281px;font-size:11px;line-height:13px;letter-spacing:0px;color:#000;">A</span>
<span style="left:703px;top:281px;font-size:11px;line-height:13px;letter-spacing:0.0px;color:#000;">100</span>
<span style="left:17px;top:297px;font-size:11px;line-height:13px;letter-spacing:-0.333px;color:#0000ff;">test</span>
<span style="left:269px;top:297px;font-size:11px;line-height:13px;letter-spacing:-0.267px;color:#ff00ff;">Testovač Pokusný</span>
<span style="left:471px;top:297px;font-size:11px;line-height:13px;letter-spacing:0px;color:#000;">A</span>
<span style="left:669px;top:297px;font-size:11px;line-height:13px;letter-spacing:-0.375px;color:#000;">123456789</span>
<span style="left:17px;top:313px;font-size:11px;line-height:13px;letter-spacing:-0.333px;color:#fff;">vankova</span>
<span style="left:269px;top:313px;font-size:11px;line-height:13px;letter-spacing:-0.176px;color:#fff;">Vaňková Šárka Ing.</span>
<span style="left:471px;top:313px;font-size:11px;line-height:13px;letter-spacing:0px;color:#fff;">A</span>
<span style="left:692px;top:313px;font-size:11px;line-height:13px;letter-spacing:-0.25px;color:#fff;">99927</span>
<span style="left:20px;top:64px;font-size:11px;line-height:13px;font-weight:bold;-webkit-text-stroke:0.3px currentColor;letter-spacing:0.278px;color:#000;">Přihlašovací jmé...</span>
<span style="left:272px;top:64px;font-size:11px;line-height:13px;font-weight:bold;-webkit-text-stroke:0.3px currentColor;letter-spacing:0.357px;color:#000;">Popis uživatele</span>
<span style="left:474px;top:64px;font-size:11px;line-height:13px;font-weight:bold;-webkit-text-stroke:0.3px currentColor;letter-spacing:0.5px;color:#000;">Aktivní</span>
<span style="left:599px;top:64px;font-size:11px;line-height:13px;font-weight:bold;-webkit-text-stroke:0.3px currentColor;letter-spacing:-0.1px;color:#000;">Číslo osoby</span>
<span style="left:20px;top:84px;font-size:11px;line-height:13px;letter-spacing:-0.5px;color:#000;">Začíná na</span>
<span style="left:272px;top:84px;font-size:11px;line-height:13px;letter-spacing:-0.5px;color:#000;">Začíná na</span>
<span style="left:473px;top:84px;font-size:11px;line-height:13px;letter-spacing:0.2px;color:#000;">Stejné</span>
<span style="left:598px;top:84px;font-size:11px;line-height:13px;letter-spacing:0.2px;color:#000;">Stejné</span>
<span style="left:35px;top:363px;font-size:11px;line-height:13px;letter-spacing:-0.143px;color:#000;">Uživatel</span>
<span style="left:169px;top:362px;font-size:12px;line-height:14px;font-weight:bold;-webkit-text-stroke:0.3px currentColor;letter-spacing:0.333px;color:#0000f0;">vankova</span>
<span style="left:166px;top:383px;font-size:12px;line-height:14px;font-weight:bold;-webkit-text-stroke:0.3px currentColor;letter-spacing:0.529px;color:#800080;">Vaňková Šárka Ing.</span>
<span style="left:667px;top:362px;font-size:11px;line-height:13px;letter-spacing:-0.167px;color:#202040;">Aktivní</span>
<span style="left:143px;top:417px;font-size:11px;line-height:13px;letter-spacing:-0.125px;color:#000;">Přidělené profily</span>
<span style="left:44px;top:415px;font-size:11px;line-height:13px;letter-spacing:-0.308px;color:#000;">Základní údaje</span>
<span style="left:30px;top:437px;font-size:11px;line-height:13px;font-weight:bold;-webkit-text-stroke:0.3px currentColor;letter-spacing:0.5px;color:#000;">Uživatelské údaje</span>
<span style="left:37px;top:460px;font-size:11px;line-height:13px;letter-spacing:-0.071px;color:#000;">Název uživatele</span>
<span style="left:38px;top:480px;font-size:11px;line-height:13px;letter-spacing:-0.5px;color:#000;">Osoba</span>
<span style="left:37px;top:500px;font-size:11px;line-height:13px;letter-spacing:-0.4px;color:#000;">E-mail</span>
<span style="left:171px;top:460px;font-size:11px;line-height:13px;letter-spacing:-0.176px;color:#000;">Vaňková Šárka Ing.</span>
<span style="left:275px;top:480px;font-size:11px;line-height:13px;letter-spacing:-0.25px;color:#000;">99927</span>
<span style="left:338px;top:480px;font-size:11px;line-height:13px;letter-spacing:-0.333px;color:#800080;">Vaňková Šárka</span>
<span style="left:658px;top:480px;font-size:11px;line-height:13px;letter-spacing:-0.5px;color:#101030;">Osoba</span>
<span style="left:30px;top:527px;font-size:11px;line-height:13px;font-weight:bold;-webkit-text-stroke:0.3px currentColor;letter-spacing:0.294px;color:#000;">Přihlašovací údaje</span>
<span style="left:37px;top:550px;font-size:11px;line-height:13px;letter-spacing:-0.2px;color:#000;">Přihlašovací jméno (login)</span>
<span style="left:37px;top:570px;font-size:11px;line-height:13px;letter-spacing:-0.5px;color:#000;">Heslo</span>
<span style="left:37px;top:590px;font-size:11px;line-height:13px;letter-spacing:0.0px;color:#000;">Kontext uživatele v AD</span>
<span style="left:171px;top:550px;font-size:11px;line-height:13px;letter-spacing:-0.167px;color:#000;">vankova</span>
<span style="left:186px;top:610px;font-size:11px;line-height:13px;letter-spacing:-0.062px;color:#404040;">Získat AD kontext</span>
<span style="left:497px;top:570px;font-size:11px;line-height:13px;letter-spacing:-0.368px;color:#000;">Poslední změna hesla</span>
<span style="left:611px;top:570px;font-size:11px;line-height:13px;letter-spacing:0.0px;color:#000;">23.05.2016</span>
<span style="left:30px;top:636px;font-size:11px;line-height:13px;font-weight:bold;-webkit-text-stroke:0.3px currentColor;letter-spacing:0.3px;color:#000;">Další údaje</span>
<span style="left:37px;top:660px;font-size:11px;line-height:13px;letter-spacing:-0.036px;color:#000;">Max. doba nečinnosti (minuty)</span>
<span style="left:266px;top:660px;font-size:11px;line-height:13px;letter-spacing:-0.5px;color:#000;">120</span></body></html>
